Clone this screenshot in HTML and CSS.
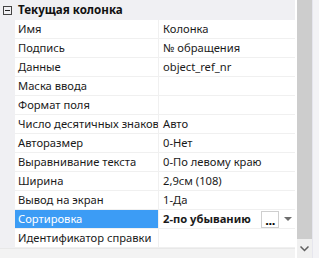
FILE: index.html
```html
<!DOCTYPE html>
<html>
<head>
<meta charset="utf-8">
<link rel="stylesheet" href="styles.css">
</head>
<body>
<div class="panel">
  <div class="grid">
    <div class="cat">
      <div class="gutter"><span class="minus"></span></div>
      <div class="cat-title">Текущая колонка</div>
    </div>
    <div class="row"><div class="gutter"></div><div class="name">Имя</div><div class="val">Колонка</div></div>
    <div class="row"><div class="gutter"></div><div class="name">Подпись</div><div class="val">№ обращения</div></div>
    <div class="row"><div class="gutter"></div><div class="name">Данные</div><div class="val">object_ref_nr</div></div>
    <div class="row"><div class="gutter"></div><div class="name">Маска ввода</div><div class="val"></div></div>
    <div class="row"><div class="gutter"></div><div class="name">Формат поля</div><div class="val"></div></div>
    <div class="row"><div class="gutter"></div><div class="name">Число десятичных знаков</div><div class="val">Авто</div></div>
    <div class="row"><div class="gutter"></div><div class="name">Авторазмер</div><div class="val">0-Нет</div></div>
    <div class="row"><div class="gutter"></div><div class="name">Выравнивание текста</div><div class="val">0-По левому краю</div></div>
    <div class="row"><div class="gutter"></div><div class="name">Ширина</div><div class="val">2,9см (108)</div></div>
    <div class="row"><div class="gutter"></div><div class="name">Вывод на экран</div><div class="val">1-Да</div></div>
    <div class="row sel"><div class="gutter"></div><div class="name">Сортировка</div><div class="val"><span class="bold">2-по убыванию</span><span class="dots">...</span><span class="drop"><span class="tri"></span></span></div></div>
    <div class="row"><div class="gutter"></div><div class="name">Идентификатор справки</div><div class="val"></div></div>
    <div class="bottom"></div>
  </div>
  <div class="sep"></div>
  <div class="scroll">
    <div class="thumb"></div>
    <div class="arrow"><svg width="9" height="6" viewBox="0 0 9 6"><path d="M0.5 0.5 L4.5 4.5 L8.5 0.5" fill="none" stroke="#606060" stroke-width="1.5"/></svg></div>
  </div>
  <div class="edge"></div>
</div>
</body>
</html>
```
FILE: styles.css
```css
html, body { margin: 0; padding: 0; }
body {
  width: 319px; height: 258px; overflow: hidden;
  font-family: "Noto Sans", "Open Sans", sans-serif;
  font-size: 11.2px; color: #1a1a1a; background: #fff;
}
.panel { display: flex; height: 258px; }
.grid { width: 296px; display: flex; flex-direction: column; background: #fff; }
.cat { display: flex; height: 20px; background: #f0f0f3; }
.gutter { width: 15px; flex: none; background: #f0f0f3; display: flex; align-items: center; justify-content: center; }
.minus {
  width: 7px; height: 7px; border: 1px solid #444; position: relative; margin-top: 1px; margin-left: -1px;
}
.minus::after { content: ""; position: absolute; left: 1px; right: 1px; top: 3px; height: 1px; background: #222; }
.cat-title { font-weight: bold; font-size: 11.6px; line-height: 20px; padding-left: 3px; color: #111; }
.row { display: flex; height: 18px; border-bottom: 1px solid #f0f0f0; }
.row .gutter { margin-bottom: -1px; }
.name {
  width: 140px; flex: none; padding-left: 3px; line-height: 18px;
  border-right: 1px solid #f0f0f0; white-space: nowrap; overflow: hidden;
}
.val { flex: 1; padding-left: 4px; line-height: 18px; white-space: nowrap; display: flex; align-items: center; }
.sel .name { background: #3c9cf5; color: #fff; }
.bold { font-weight: bold; flex: 1; }
.dots {
  width: 16px; height: 15px; border: 1px solid #cfcfcf; background: #fff; font-weight: bold;
  font-size: 13px; line-height: 17px; text-align: center; letter-spacing: -0.5px; color: #000;
  overflow: hidden;
}
.drop {
  width: 15px; height: 18px; margin-left: 1px;
  background-color: #fff;
  background-image: radial-gradient(#e2e2e2 0.6px, transparent 0.7px);
  background-size: 2px 2px;
  display: flex; align-items: center; justify-content: center;
}
.tri { width: 0; height: 0; border-left: 4px solid transparent; border-right: 4px solid transparent; border-top: 4px solid #6e6e6e; }
.bottom { flex: 1; background: #f3f3f3; border-top: 1px solid #e8e8e8; }
.sep { width: 2px; background: #fff; }
.scroll { width: 15px; display: flex; flex-direction: column; background: #f0f0f0; }
.thumb { height: 239px; background: #cdcdcd; }
.arrow { flex: 1; display: flex; justify-content: center; align-items: flex-start; padding-top: 7px; }
.edge { width: 6px; background: #f3f3f6; border-left: 1px solid #e6e6ee; }
```
